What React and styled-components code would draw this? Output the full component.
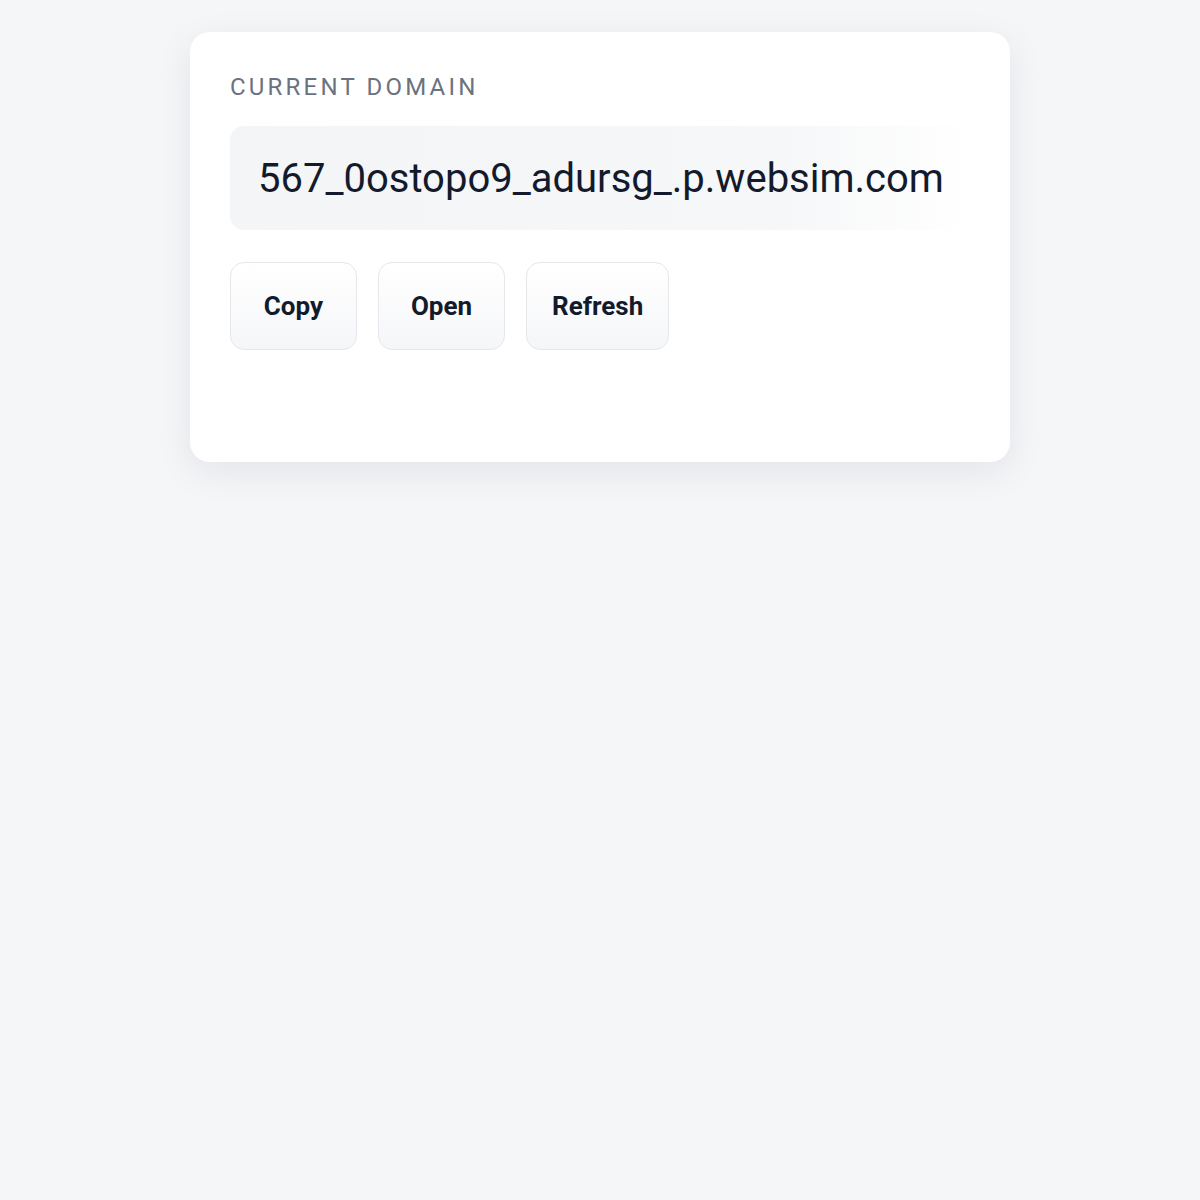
import React from 'react';
import styled, { createGlobalStyle } from 'styled-components';

const GlobalStyle = createGlobalStyle`
  html, body {
    margin: 0;
    padding: 0;
    background: #f5f6f8;
    font-family: Roboto, 'Liberation Sans', sans-serif;
  }
`;

const Page = styled.div`
  min-height: 1200px;
  display: flex;
  justify-content: center;
  align-items: flex-start;
  padding-top: 32px;
  box-sizing: border-box;
`;

const Card = styled.div`
  width: 820px;
  box-sizing: border-box;
  background: #ffffff;
  border-radius: 20px;
  padding: 40px 40px 112px;
  box-shadow: 0 10px 36px rgba(17, 24, 39, 0.08);
`;

const Label = styled.div`
  font-size: 24px;
  line-height: 30px;
  letter-spacing: 3.2px;
  color: #6b7280;
  text-transform: uppercase;
`;

const DomainBox = styled.div`
  margin-top: 24px;
  height: 104px;
  border-radius: 14px;
  padding: 0 28px;
  display: flex;
  align-items: center;
  background: linear-gradient(90deg, #f4f5f7 0%, #f6f7f8 75%, #ffffff 100%);
  font-size: 40px;
  color: #131a2c;
  white-space: nowrap;
`;

const Actions = styled.div`
  margin-top: 32px;
  display: flex;
  gap: 21px;
`;

const Button = styled.button`
  min-width: 127px;
  height: 88px;
  padding: 0 25px;
  box-sizing: border-box;
  border: 1px solid #e5e7eb;
  border-radius: 14px;
  background: linear-gradient(180deg, #ffffff 0%, #f5f6f8 100%);
  font-family: Roboto, 'Liberation Sans', sans-serif;
  font-weight: 700;
  font-size: 26px;
  color: #131a2c;
  cursor: pointer;
`;

export default function App() {
  return (
    <>
      <GlobalStyle />
      <Page>
        <Card>
          <Label>Current Domain</Label>
          <DomainBox>567_0ostopo9_adursg_.p.websim.com</DomainBox>
          <Actions>
            <Button>Copy</Button>
            <Button>Open</Button>
            <Button>Refresh</Button>
          </Actions>
        </Card>
      </Page>
    </>
  );
}
